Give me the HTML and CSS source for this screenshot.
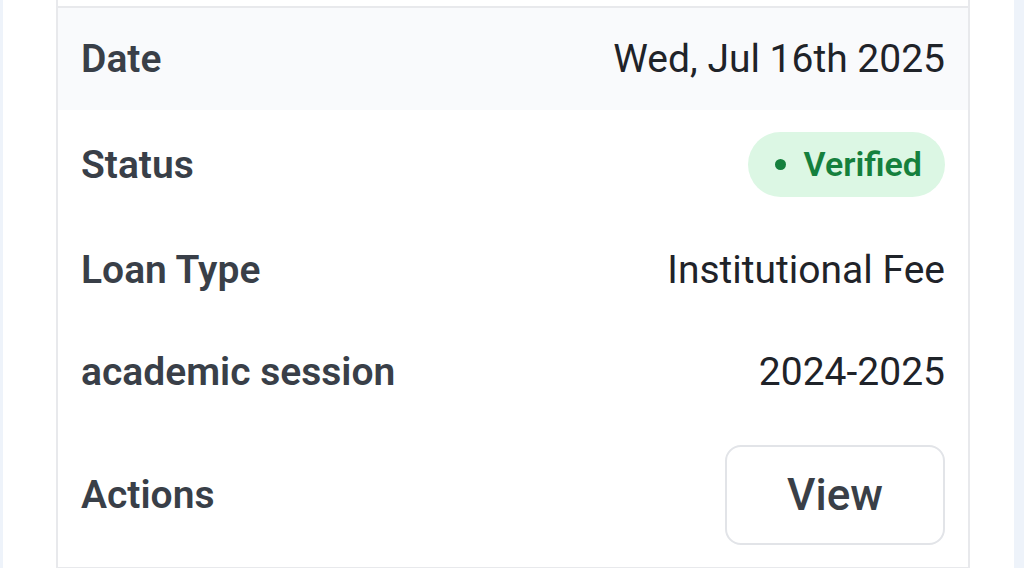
FILE: index.html
```html
<!DOCTYPE html>
<html lang="en">
<head>
  <meta charset="UTF-8">
  <meta name="viewport" content="width=device-width, initial-scale=1.0">
  <title>Loan Application</title>
  <link rel="stylesheet" href="styles.css">
</head>
<body>
  <main class="panel">
    <section class="card">
      <div class="card-top"></div>
      <div class="row row-shaded">
        <span class="label">Date</span>
        <span class="value">Wed, Jul 16th 2025</span>
      </div>
      <div class="row">
        <span class="label">Status</span>
        <span class="badge"><span class="dot"></span>Verified</span>
      </div>
      <div class="row">
        <span class="label">Loan Type</span>
        <span class="value">Institutional Fee</span>
      </div>
      <div class="row">
        <span class="label">academic session</span>
        <span class="value">2024-2025</span>
      </div>
      <div class="row">
        <span class="label">Actions</span>
        <button class="view-btn">View</button>
      </div>
    </section>
  </main>
</body>
</html>
```

FILE: styles.css
```css
html, body {
  margin: 0;
  padding: 0;
  height: 100%;
}
body {
  font-family: Roboto, 'Liberation Sans', sans-serif;
  background-color: #eef3fa;
  padding: 0 10px 0 3px;
  box-sizing: border-box;
  overflow: hidden;
}
.panel {
  background: #fff;
  height: 100%;
  padding: 0 44px 0 53px;
}
.card {
  width: 914px;
  box-sizing: border-box;
  border: 2px solid #e8e9ec;
  border-top: none;
  background: #fff;
}
.card-top {
  height: 6px;
  border-bottom: 2px solid #e8e9ec;
}
.row {
  display: flex;
  align-items: center;
  justify-content: space-between;
  padding: 22px 23px;
  line-height: 58px;
  font-size: 39px;
}
.row-shaded {
  background: #f9fafc;
}
.label {
  font-weight: 600;
  color: #393f48;
}
.value {
  color: #1f2329;
}
.badge {
  display: flex;
  align-items: center;
  gap: 18px;
  background: #dcf7e4;
  color: #15803d;
  font-size: 34px;
  font-weight: 600;
  line-height: 41px;
  padding: 12px 23px 12px 27px;
  border-radius: 999px;
}
.dot {
  width: 11px;
  height: 11px;
  border-radius: 50%;
  background: #15803d;
}
.view-btn {
  width: 220px;
  height: 100px;
  background: #fff;
  border: 2px solid #e2e4e8;
  border-radius: 16px;
  font-family: Roboto, 'Liberation Sans', sans-serif;
  font-size: 44px;
  font-weight: 500;
  color: #3a3f47;
  cursor: pointer;
}
```
